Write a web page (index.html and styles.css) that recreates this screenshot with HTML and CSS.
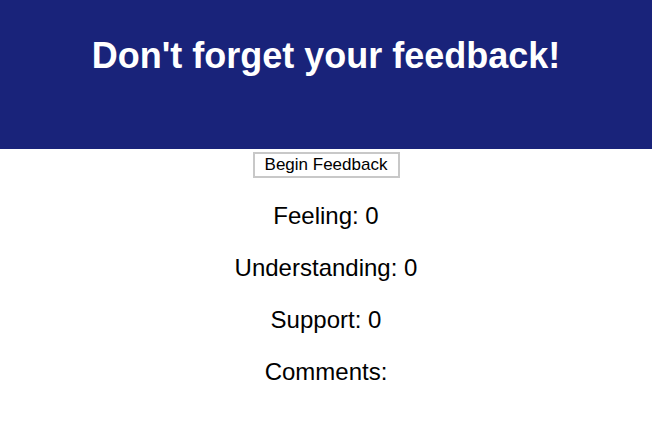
FILE: index.html
```html
<!DOCTYPE html>
<html>
<head>
<meta charset="utf-8">
<link rel="stylesheet" href="styles.css">
</head>
<body>
<header class="banner">
  <h1 class="title">Don't forget your feedback!</h1>
</header>
<main class="content">
  <button class="begin">Begin Feedback</button>
  <div class="stats">
    <p class="stat">Feeling: 0</p>
    <p class="stat">Understanding: 0</p>
    <p class="stat">Support: 0</p>
    <p class="stat">Comments:</p>
  </div>
</main>
</body>
</html>
```
FILE: styles.css
```css
html, body {
  margin: 0;
  padding: 0;
  background: #ffffff;
}
body {
  font-family: "Liberation Sans", Arial, sans-serif;
  color: #000;
}
.banner {
  background: #19237a;
  height: 149px;
  box-sizing: border-box;
  padding-top: 35px;
  text-align: center;
}
.title {
  margin: 0;
  color: #fff;
  font-size: 36px;
  line-height: 41px;
  font-weight: bold;
}
.content {
  display: flex;
  flex-direction: column;
  align-items: center;
}
.begin {
  margin-top: 3px;
  height: 26px;
  width: 147px;
  padding: 0;
  background: #fff;
  border: 2px solid #c8c8c8;
  border-radius: 0;
  font-family: "Liberation Sans", Arial, sans-serif;
  font-size: 17px;
  line-height: 20px;
  color: #000;
}
.stats {
  display: flex;
  flex-direction: column;
  align-items: center;
  gap: 24px;
  margin-top: 24px;
}
.stat {
  margin: 0;
  font-size: 24px;
  line-height: 28px;
}
```
